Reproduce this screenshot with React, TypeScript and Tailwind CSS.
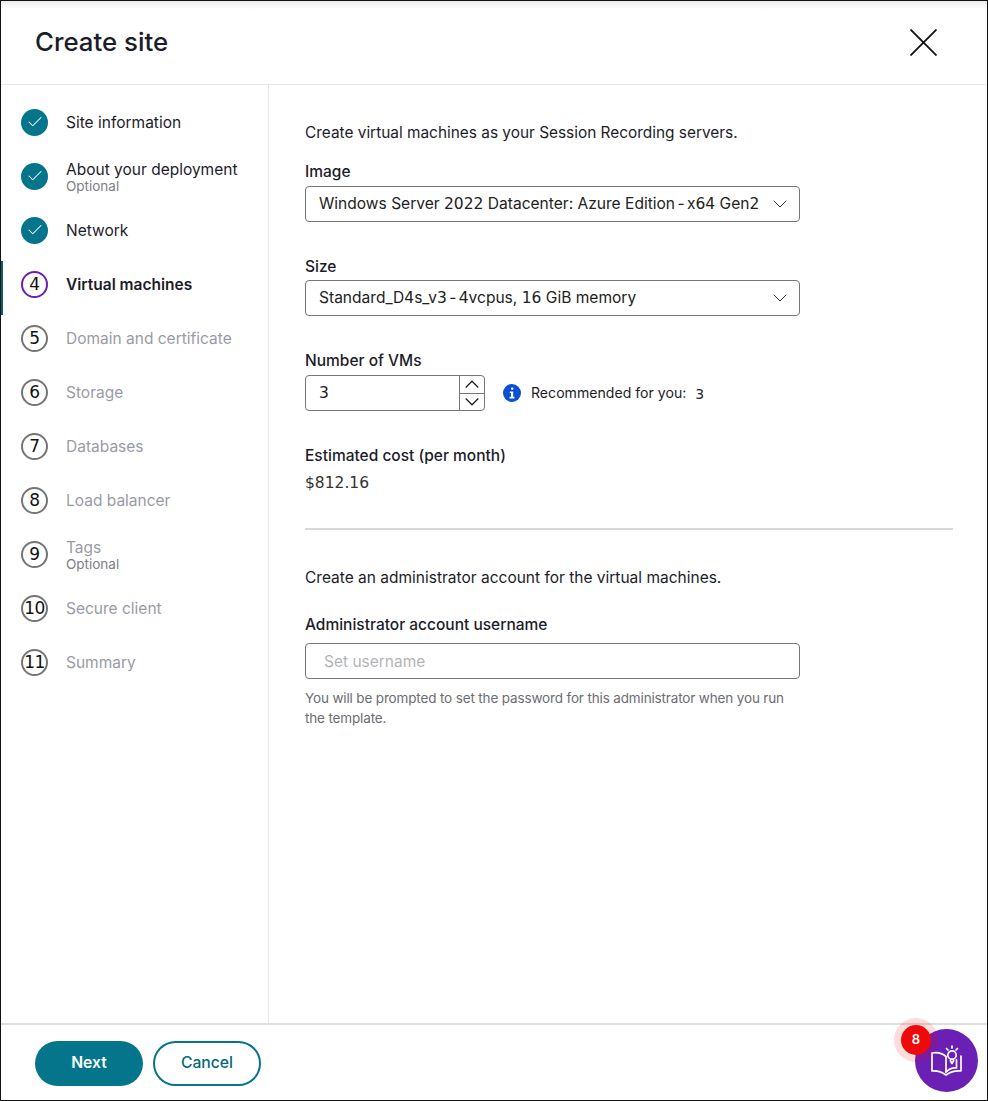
import type { ReactNode } from "react";
import { ChevronDown, Check } from "lucide-react";

const font = "font-['Inter','Liberation_Sans',sans-serif]";

const steps = [
  { n: 1, label: "Site information", state: "done" },
  { n: 2, label: "About your deployment", sub: "Optional", state: "done" },
  { n: 3, label: "Network", state: "done" },
  { n: 4, label: "Virtual machines", state: "active" },
  { n: 5, label: "Domain and certificate", state: "todo" },
  { n: 6, label: "Storage", state: "todo" },
  { n: 7, label: "Databases", state: "todo" },
  { n: 8, label: "Load balancer", state: "todo" },
  { n: 9, label: "Tags", sub: "Optional", state: "todo" },
  { n: 10, label: "Secure client", state: "todo" },
  { n: 11, label: "Summary", state: "todo" },
];

// digits in the reference are wide with a footed 1
function Num({ children }: { children: ReactNode }) {
  return <span className="font-['DejaVu_Sans',sans-serif] text-[15.500px]">{children}</span>;
}

function Dash() {
  return <span className="[word-spacing:-2px]"> - </span>;
}

function StepDot({ n, state }: { n: number; state: string }) {
  if (state === "done") {
    return (
      <div className="flex h-[27px] w-[27px] shrink-0 items-center justify-center rounded-full bg-[#04758a]">
        <Check className="h-[18px] w-[18px] text-white" strokeWidth={1.4} />
      </div>
    );
  }
  const ring = state === "active" ? "border-[#6a1fb5]" : "border-[#757575]";
  return (
    <div className={`flex h-[27px] w-[27px] shrink-0 items-center justify-center rounded-full border-2 pt-[1px] font-['DejaVu_Sans',sans-serif] text-[17px] tracking-[-0.5px] text-[#111] ${ring}`}>
      {n}
    </div>
  );
}

function Select({ children }: { children: ReactNode }) {
  return (
    <div className="flex h-[36px] w-[495px] items-center justify-between rounded border border-[#767676] pl-[13px] pr-[7px] text-[15.550px] text-[#222]">
      <span className="whitespace-nowrap pt-[1px]">{children}</span>
      <ChevronDown className="h-[24px] w-[24px] text-[#333]" strokeWidth={1} />
    </div>
  );
}

export default function App() {
  return (
    <div className={`flex h-[1101px] w-[988px] flex-col overflow-hidden border border-[#111] bg-white text-[#1c1c2a] ${font}`}>
      <header className="flex h-[84px] shrink-0 items-center justify-between border-b border-[#e8e8e8] bg-gradient-to-b from-[#ececec] to-white to-[10%] pl-[34px] pr-[50px]">
        <h1 className="text-[25.800px] font-medium">Create site</h1>
        <svg width="27" height="27" viewBox="0 0 27 27" className="text-[#111]">
          <path d="M.5.5 26.500 26.500M26.500.5.5 26.500" stroke="currentColor" strokeWidth="1.800" fill="none" />
        </svg>
      </header>

      <div className="flex min-h-0 flex-1">
        <nav className="w-[268px] shrink-0 border-r border-[#e8e8e8] pt-[10px]">
          {steps.map((s) => (
            <div key={s.n} className="relative flex h-[54px] items-center gap-[18px] pl-[20px]">
              {s.state === "active" && <div className="absolute left-0 top-[4px] h-[54px] w-[2px] bg-[#04606f]" />}
              <StepDot n={s.n} state={s.state} />
              <div className="flex flex-col pt-[2px]">
                <span
                  className={`whitespace-nowrap text-[15.500px] leading-[18px] ${s.state === "active" ? "font-semibold text-[#1c1c2a]" : s.state === "todo" ? "text-[#9a9aa6]" : "text-[#1c1c2a]"}`}
                >
                  {s.label}
                </span>
                {s.sub && <span className="text-[13.500px] leading-[15px] text-[#7d7d86]">{s.sub}</span>}
              </div>
            </div>
          ))}
        </nav>

        <main className="flex-1 pl-[36px] pr-[34px] pt-[38px] text-[15.500px]">
          <p className="text-[15.400px] leading-[20px]">Create virtual machines as your Session Recording servers.</p>

          <label className="mt-[19px] block font-medium leading-[20px]">Image</label>
          <div className="mt-[4px]">
            <Select>
              Windows Server <Num>2022</Num> Datacenter: Azure Edition<Dash />x<Num>64</Num> Gen<Num>2</Num>
            </Select>
          </div>

          <label className="mt-[35px] block font-medium leading-[20px]">Size</label>
          <div className="mt-[3px]">
            <Select>
              Standard_D<Num>4</Num>s_v<Num>3</Num><Dash /><Num>4</Num>vcpus, <Num>16</Num> GiB memory
            </Select>
          </div>

          <label className="mt-[35px] block font-medium leading-[20px]">Number of VMs</label>
          <div className="mt-[4px] flex items-center">
            <div className="flex h-[36px] w-[180px] items-stretch rounded border border-[#767676]">
              <div className="flex flex-1 items-center pl-[13px] pt-[1px]"><Num>3</Num></div>
              <div className="flex w-[25px] flex-col border-l border-[#767676]">
                <div className="flex flex-1 items-center justify-center border-b border-[#767676]">
                  <svg width="14" height="8" viewBox="0 0 14 8" fill="none" stroke="#222" strokeWidth="1.300">
                    <path d="M.7 7.500 7 1.200l6.300 6.300" />
                  </svg>
                </div>
                <div className="flex flex-1 items-center justify-center">
                  <svg width="14" height="8" viewBox="0 0 14 8" fill="none" stroke="#222" strokeWidth="1.300">
                    <path d="M.7.5 7 6.800 13.300.5" />
                  </svg>
                </div>
              </div>
            </div>
            <svg width="18" height="18" viewBox="0 0 18 18" className="ml-[18px]">
              <circle cx="9" cy="9" r="9" fill="#0a4fd6" />
              <rect x="8" y="3.400" width="2.400" height="2.400" rx="1" fill="#fff" />
              <path d="M6.800 7.500h3.400v5.300h1.200v1.600H6.600v-1.600h1.400V9.100H6.800z" fill="#fff" />
            </svg>
            <span className="ml-[10px] text-[14.100px]">Recommended for you:</span>
            <span className="ml-[9px] pt-[1px] font-['DejaVu_Sans',sans-serif] text-[14px] leading-none">3</span>
          </div>

          <div className="mt-[35px] font-medium leading-[20px]">Estimated cost (per month)</div>
          <div className="mt-[7px] font-['DejaVu_Sans',sans-serif] text-[15.500px] leading-[20px] text-[#333]">$812.16</div>

          <hr className="mt-[35px] border-t-2 border-[#d8d8d8]" />

          <p className="mt-[38px] leading-[20px]">Create an administrator account for the virtual machines.</p>

          <label className="mt-[27px] block font-medium leading-[20px]">Administrator account username</label>
          <div className="mt-[8px] flex h-[36px] w-[495px] items-center rounded border border-[#767676] pl-[18px] pt-[1px] text-[#b4b4b8]">
            Set username
          </div>
          <p className="mt-[9px] w-[495px] text-[13.500px] leading-[20px] tracking-[-0.15px] text-[#6c6c74]">
            You will be prompted to set the password for this administrator when you run the template.
          </p>
        </main>
      </div>

      <footer className="relative flex h-[77px] shrink-0 items-center gap-[10px] border-t-2 border-[#dedede] pl-[34px] pt-[2px]">
        <button className="h-[45px] w-[108px] rounded-full bg-[#04758a] pb-[2px] text-[15.700px] font-semibold text-white">Next</button>
        <button className="h-[45px] w-[108px] rounded-full border-2 border-[#04758a] pb-[2px] text-[15.700px] font-medium text-[#04687c]">Cancel</button>

        <div className="absolute left-[914px] top-[4px] flex h-[63px] w-[63px] items-center justify-center rounded-full bg-[#6a1fb5]">
          <svg width="33" height="32" viewBox="0 0 33 32" fill="none" stroke="#fff" strokeWidth="1.700" strokeLinecap="round" strokeLinejoin="round">
            <path d="M2 8C7 7 12 8 16 11.500V27" />
            <path d="M2 8V26C8 25.500 12 27 16 30C20 27 25 25.500 31 26V11" />
            <path d="M26.500 14.500V23C23 22.500 19 24 16 27" />
            <circle cx="22" cy="10" r="4.200" />
            <path d="M20.500 14.500V16L22 18.500L23.500 16V14.500" />
            <path d="M22 1V3M16.500 3.500L18 5M27.500 3.500L26 5" />
          </svg>
          <span className="absolute -left-[14px] -top-[4px] flex h-[30px] w-[30px] items-center justify-center rounded-full bg-[#ee0a0a] text-[13px] font-semibold text-white shadow-[0_0_0_7px_rgba(238,10,10,0.14)]">
            8
          </span>
        </div>
      </footer>
    </div>
  );
}
